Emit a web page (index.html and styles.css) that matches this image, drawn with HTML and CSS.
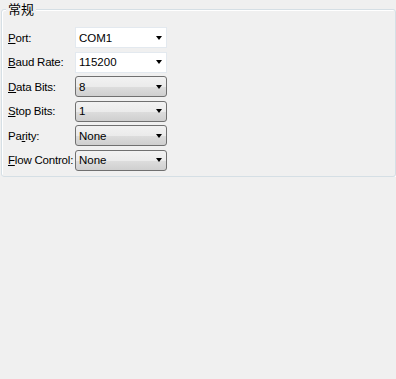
FILE: index.html
```html
<!DOCTYPE html>
<html lang="zh">
<head>
    <meta charset="UTF-8">
    <title>常规</title>
    <link rel="stylesheet" href="styles.css">
</head>
<body>
    <div class="group">
        <span class="group-title">常规</span>
        <div class="form">
            <label><u>P</u>ort:</label>
            <div class="combo edit"><span>COM1</span><i class="arrow"></i></div>

            <label><u>B</u>aud Rate:</label>
            <div class="combo edit"><span>115200</span><i class="arrow"></i></div>

            <label><u>D</u>ata Bits:</label>
            <div class="combo"><span>8</span><i class="arrow"></i></div>

            <label><u>S</u>top Bits:</label>
            <div class="combo"><span>1</span><i class="arrow"></i></div>

            <label>Pa<u>r</u>ity:</label>
            <div class="combo"><span>None</span><i class="arrow"></i></div>

            <label><u>F</u>low Control:</label>
            <div class="combo"><span>None</span><i class="arrow"></i></div>
        </div>
    </div>
</body>
</html>
```

FILE: styles.css
```css
body {
    margin: 0;
    background-color: #f0f0f0;
    font-family: "Liberation Sans", "Noto Sans CJK SC", sans-serif;
    font-size: 11.5px;
    color: #000;
}
.group {
    position: relative;
    margin: 9px 0 0 1px;
    width: 393px;
    height: 166px;
    border: 1px solid #d5dfe5;
    border-radius: 3px;
    box-shadow: 1px 1px 0 #fff, inset 1px 1px 0 #fff;
}
.group-title {
    position: absolute;
    top: -10px;
    left: 4px;
    padding: 0 2px;
    background-color: #f0f0f0;
    font-family: "Noto Sans CJK SC", sans-serif;
    font-size: 13px;
    line-height: 17px;
}
.form {
    display: grid;
    grid-template-columns: 67px 92px;
    row-gap: 3.5px;
    padding: 17px 0 0 6px;
}
.form label {
    display: flex;
    align-items: center;
    height: 21px;
    letter-spacing: -0.2px;
}
.form u {
    text-decoration-thickness: 1px;
    text-underline-offset: 1px;
}
.combo {
    display: flex;
    align-items: center;
    justify-content: space-between;
    box-sizing: border-box;
    height: 21px;
    padding: 0 4px 0 3px;
    border: 1px solid #707070;
    border-radius: 3px;
    background: linear-gradient(#f2f2f2, #ebebeb 50%, #dddddd 51%, #cfcfcf);
}
.combo.edit {
    border: 1px solid #e3e9ef;
    border-radius: 0;
    background: #fff;
}
.arrow {
    width: 0;
    height: 0;
    border-left: 3.5px solid transparent;
    border-right: 3.5px solid transparent;
    border-top: 4px solid #000;
}
```
